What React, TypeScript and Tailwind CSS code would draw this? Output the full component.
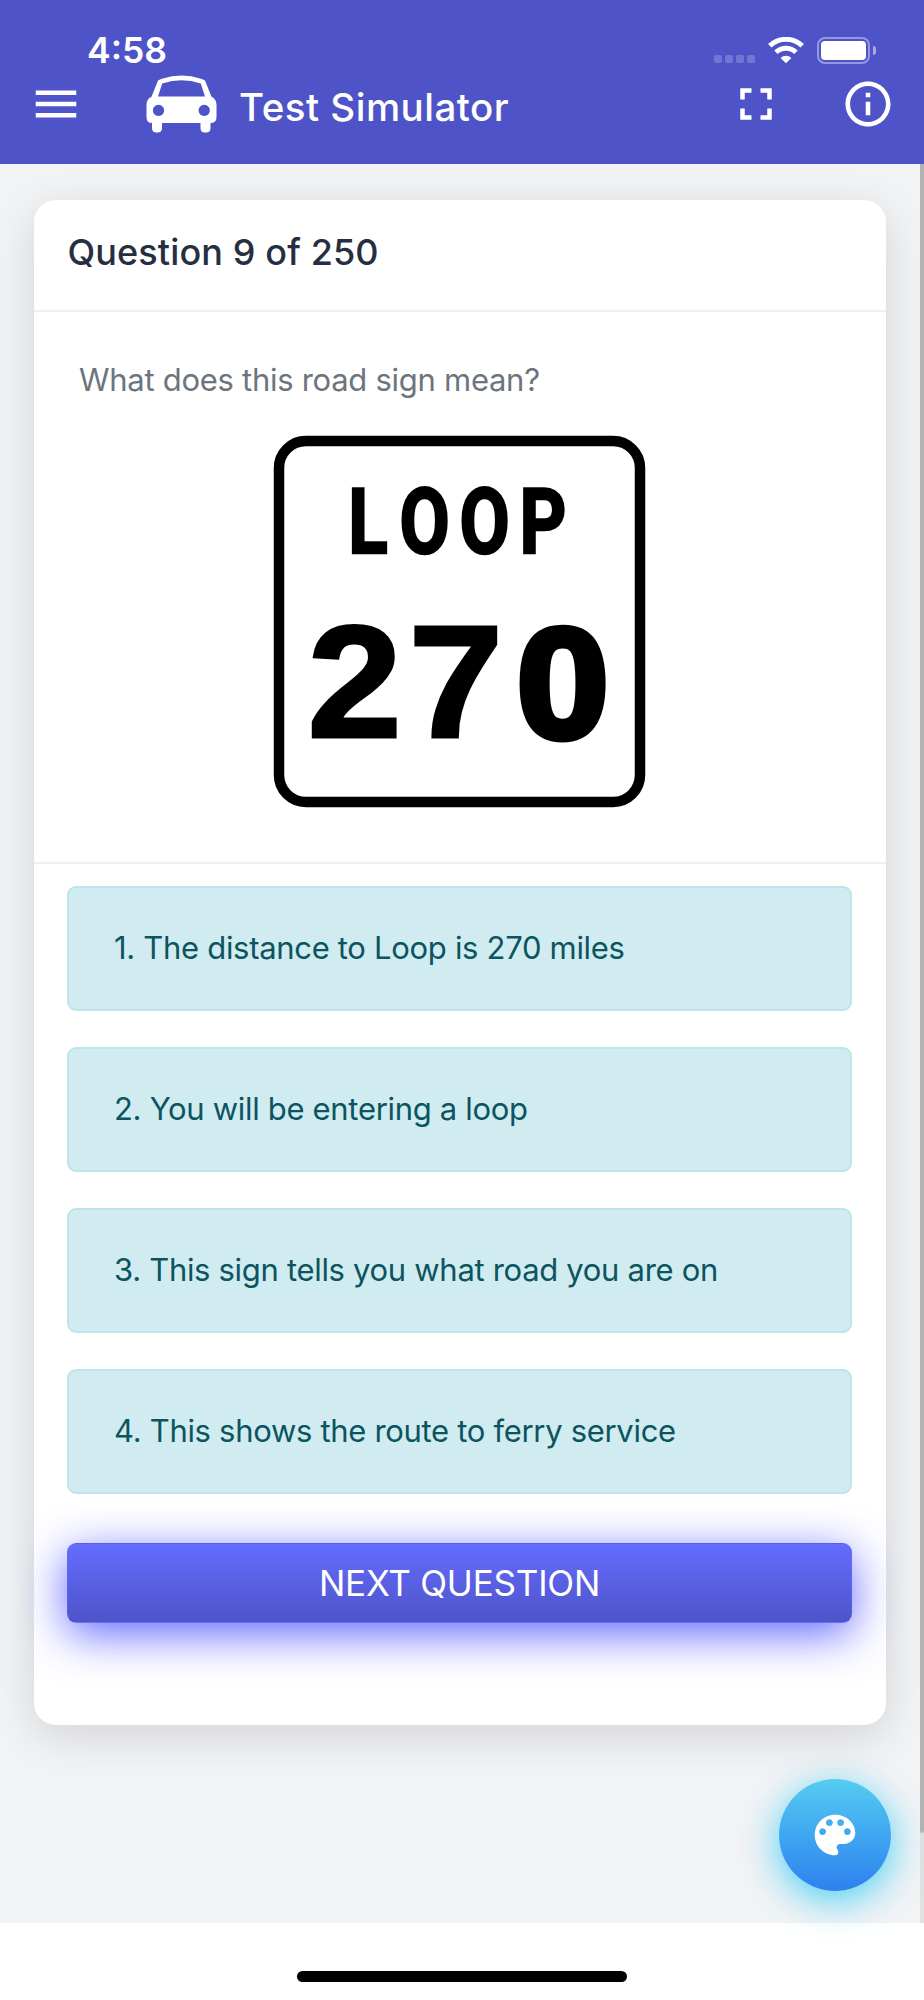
import { useState } from "react";

const answers = [
  "The distance to Loop is 270 miles",
  "You will be entering a loop",
  "This sign tells you what road you are on",
  "This shows the route to ferry service",
];

function StatusBar() {
  return (
    <div className="flex h-[76.5px] items-start justify-between pr-12 pl-[87px]">
      <span className="mt-[28.5px] text-[35.5px] leading-[44px] font-semibold">4:58</span>
      <div className="mt-[37px] flex h-[27px] items-center">
        <div className="flex gap-[3.5px] self-end pb-px">
          {[0, 1, 2, 3].map((dot) => (
            <span key={dot} className="size-[7.6px] rounded-[2px] bg-white/20" />
          ))}
        </div>
        <svg className="ml-[13px] h-[27px] w-9" viewBox="0 0 36 27" fill="none">
          <path d="M1.8 8.8a23.5 23.5 0 0 1 32.4 0" stroke="#fff" strokeWidth="5" />
          <path d="M8 15.3a14.5 14.5 0 0 1 20 0" stroke="#fff" strokeWidth="5" />
          <path d="M18 26.3l-5.4-5.4a8 8 0 0 1 10.8 0z" fill="#fff" />
        </svg>
        <div className="ml-[13px] h-[27px] w-[53px] rounded-[8px] border-2 border-white/40 p-[2px]">
          <div className="size-full rounded-[4px] bg-white" />
        </div>
        <div className="ml-[3px] h-[9px] w-[3px] rounded-r-full bg-white/50" />
      </div>
    </div>
  );
}

function CarIcon() {
  return (
    <svg className="h-[58px] w-[71px]" viewBox="0 0 71 58" fill="#fff" fillRule="evenodd">
      <path d="M12 5.5Q14 4.5 16 3.8Q35.5-2.6 55 3.8Q57 4.5 59 5.5L65.5 21.8Q70.5 24 70.5 30V42Q70.5 48 64.5 48V53Q64.5 57.5 60 57.5H59Q54.5 57.5 54.5 53V48H16V53Q16 57.5 11.5 57.5H10.5Q6 57.5 6 53V48Q.5 48 .5 42V30Q.5 24 5.5 21.8ZM16.2 8.5L12 21.5H59L54.8 8.5Q35.5 2.2 16.2 8.5ZM12.5 29.8a5.6 5.6 0 1 0 .01 0ZM58.2 29.8a5.6 5.6 0 1 0 .01 0Z" />
    </svg>
  );
}

function Toolbar() {
  return (
    <div className="flex h-[54px] items-center pr-[29px] pl-[29px]">
      <button aria-label="Menu">
        <svg className="size-[54px]" viewBox="0 0 24 24" fill="#fff">
          <path d="M3 18h18v-2H3v2zm0-5h18v-2H3v2zm0-7v2h18V6H3z" />
        </svg>
      </button>
      <div className="ml-[63px] flex flex-1 items-center">
        <CarIcon />
        <h1 className="ml-[22px] pt-[7px] text-[38.5px] leading-[44px] font-medium tracking-[0.5px] whitespace-nowrap">Test Simulator</h1>
      </div>
      <button aria-label="Fullscreen">
        <svg className="size-[54px]" viewBox="0 0 24 24" fill="#fff">
          <path d="M7 14H5v5h5v-2H7v-3zm-2-4h2V7h3V5H5v5zm12 7h-3v2h5v-5h-2v3zM14 5v2h3v3h2V5h-5z" />
        </svg>
      </button>
      <button aria-label="Info" className="ml-[58px]">
        <svg className="size-[54px]" viewBox="0 0 24 24" fill="#fff">
          <path d="M11 7h2v2h-2zm0 4h2v6h-2zm1-9C6.48 2 2 6.48 2 12s4.48 10 10 10 10-4.48 10-10S17.52 2 12 2zm0 18c-4.41 0-8-3.59-8-8s3.59-8 8-8 8 3.59 8 8-3.59 8-8 8z" />
        </svg>
      </button>
    </div>
  );
}

function RoadSign() {
  return (
    <svg className="mx-auto h-[374px] w-[374px]" viewBox="0 0 374 374">
      <rect x="6" y="7" width="361" height="361" rx="27" fill="#fff" stroke="#000" strokeWidth="10.5" />
      <text transform="translate(0 118.5) scale(.8 1)" fontSize="91" fontWeight="700" fontFamily="Roboto, sans-serif" stroke="#000" strokeWidth="2.5">
        <tspan x="94">L</tspan>
        <tspan x="158">O</tspan>
        <tspan x="233">O</tspan>
        <tspan x="308">P</tspan>
      </text>
      <text transform="translate(0 303) scale(1.06 1)" fontSize="160" fontWeight="700" fontFamily="Liberation Sans, sans-serif" stroke="#000" strokeWidth="3">
        <tspan x="32.5">2</tspan>
        <tspan x="128">7</tspan>
        <tspan x="230" fontSize="156" strokeWidth="7">0</tspan>
      </text>
    </svg>
  );
}

export default function App() {
  const [selected, setSelected] = useState<number | null>(null);

  return (
    <div className="relative flex h-[2000px] w-[924px] flex-col overflow-hidden bg-white font-[Inter,sans-serif]">
      <header className="h-[163.5px] shrink-0 bg-[#4e54c8] text-white">
        <StatusBar />
        <Toolbar />
      </header>

      <div className="flex h-[1759px] shrink-0 overflow-hidden bg-[#f2f3f5]">
        <main className="flex-1 pt-9 pl-[34px] pr-[33.5px]">
          <section className="h-[1525.5px] rounded-[22px] bg-white shadow-[0_11px_45px_rgba(0,0,0,0.13)]">
            <div className="h-[112px] border-b-2 border-[#eeeff0] px-[33.5px] pt-[30px]">
              <h2 className="text-[36px] leading-[44px] font-medium tracking-[0.12px] text-[#252f40]">Question 9 of 250</h2>
            </div>
            <div className="h-[552px] border-b-2 border-[#eeeff0] pt-[48px]">
              <p className="mb-[34px] pl-[45px] text-[31px] leading-[40px] tracking-[-0.28px] text-[#6c757d]">What does this road sign mean?</p>
              <RoadSign />
            </div>
            <ul className="flex flex-col gap-9 pt-[22px] pr-[34px] pl-[33px]">
              {answers.map((answer, i) => (
                <li
                  key={answer}
                  onClick={() => setSelected(i)}
                  aria-selected={selected === i}
                  className="flex h-[125px] cursor-pointer items-center rounded-[9px] border-2 border-[#bee5eb] bg-[#d1ecf1] pt-px pl-[45px] text-[31px] tracking-[-0.31px] text-[#0c5460]"
                >
                  {i + 1}. {answer}
                </li>
              ))}
            </ul>
            <div className="pt-[49px] pr-[34px] pl-[33px]">
              <button className="h-[80.5px] w-full rounded-[9px] border border-[#6a70ff]/40 bg-linear-to-b from-[#646cff] to-[#4e54c8] text-[35px] tracking-[-0.2px] text-white shadow-[0_11px_45px_rgba(90,95,255,0.95)]">
                NEXT QUESTION
              </button>
            </div>
          </section>
        </main>
        <div className="w-[4.5px] bg-[#e1e1e1]">
          <div className="h-[1669px] rounded-b-[3px] bg-[#b3b3b3]" />
        </div>
      </div>

      <div className="flex flex-1 justify-center pt-[48px]">
        <div className="h-[11px] w-[330px] rounded-full bg-black" />
      </div>

      {/* floating theme picker */}
      <button
        aria-label="Theme"
        className="absolute top-[1779px] left-[779px] flex size-[111.5px] items-center justify-center rounded-full bg-linear-to-b from-[#56ccf2] to-[#2f80ed] shadow-[0_9px_38px_rgba(60,205,245,0.95)]"
      >
        <svg className="size-[54px]" viewBox="0 0 24 24" fill="#fff">
          <path d="M12 3c-4.97 0-9 4.03-9 9s4.03 9 9 9c.83 0 1.5-.67 1.5-1.5 0-.39-.15-.74-.39-1.01-.23-.26-.38-.61-.38-.99 0-.83.67-1.5 1.5-1.5H16c2.76 0 5-2.24 5-5 0-4.42-4.03-8-9-8zm-5.5 9c-.83 0-1.5-.67-1.5-1.5S5.67 9 6.5 9 8 9.67 8 10.5 7.33 12 6.5 12zm3-4C8.67 8 8 7.33 8 6.5S8.67 5 9.5 5s1.5.67 1.5 1.5S10.33 8 9.5 8zm5 0c-.83 0-1.5-.67-1.5-1.5S13.67 5 14.5 5s1.5.67 1.5 1.5S15.33 8 14.5 8zm3 4c-.83 0-1.5-.67-1.5-1.5S16.67 9 17.5 9s1.5.67 1.5 1.5-.67 1.5-1.5 1.5z" />
        </svg>
      </button>
    </div>
  );
}
